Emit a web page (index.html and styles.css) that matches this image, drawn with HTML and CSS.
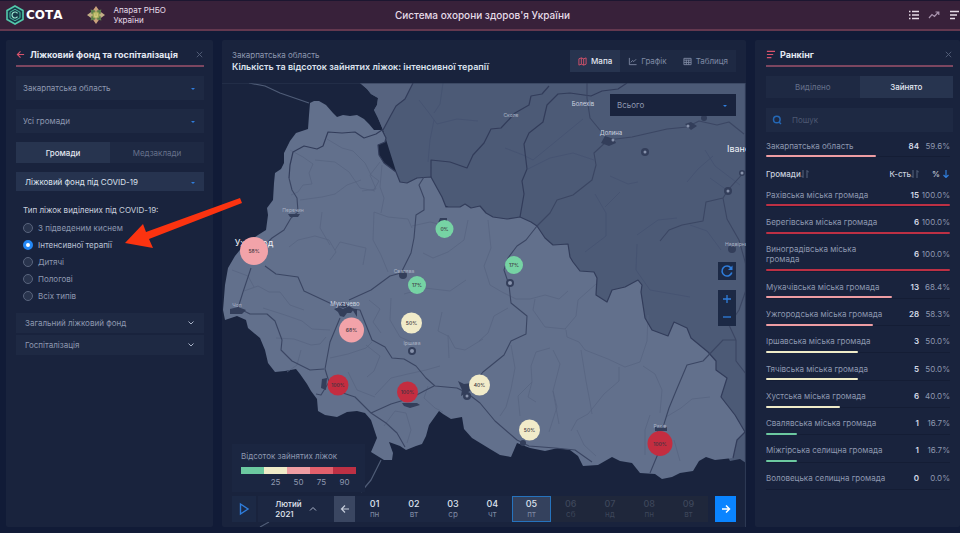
FILE: index.html
```html
<!DOCTYPE html>
<html lang="uk">
<head>
    <meta charset="UTF-8">
    <meta name="viewport" content="width=device-width, initial-scale=1.0">
    <title>Система охорони здоров'я України</title>
    <link rel="stylesheet" href="styles.css">
</head>
<body>
    <header class="topbar">
        <div class="brand">
            <svg class="logo" viewBox="0 0 20 20">
                <path d="M10 1 L18 5.5 V14.5 L10 19 L2 14.5 V5.5 Z" fill="#173a48" stroke="#52c9ab" stroke-width="1.6"/>
                <path d="M10 4.3 L15 7.2 V12.8 L10 15.7 L5 12.8 V7.2 Z" fill="none" stroke="#49b89f" stroke-width="1"/>
                <path d="M12.5 8.3 A3 3 0 1 0 12.5 11.7" fill="none" stroke="#9be9d2" stroke-width="1.2"/>
            </svg>
            <span class="logo-text">СОТА</span>
            <svg class="emblem" viewBox="0 0 20 20">
                <path d="M10 0 L13.5 5 L10 9 L6.5 5 Z M10 20 L13.5 15 L10 11 L6.5 15 Z" fill="#c9a27c"/>
                <path d="M0 10 L5 6.5 L9 10 L5 13.5 Z M20 10 L15 6.5 L11 10 L15 13.5 Z" fill="#c2ae86"/>
                <path d="M4 4 L9 5 L10 10 L5 9 Z M16 4 L11 5 L10 10 L15 9 Z M4 16 L5 11 L10 10 L9 15 Z M16 16 L15 11 L10 10 L11 15 Z" fill="#5f7f4c"/>
                <circle cx="10" cy="10" r="4" fill="#a3a958"/>
                <path d="M8.5 8 V12 H11.5 V8 M10 7 V13" fill="none" stroke="#e4d98e" stroke-width=".8"/>
            </svg>
            <span class="owner">Апарат РНБО<br>України</span>
        </div>
        <h1>Система охорони здоров'я України</h1>
        <nav class="top-icons">
            <button aria-label="Список"><svg viewBox="0 0 12 12"><path d="M1 2.5h1.5M4 2.5h7M1 6h1.5M4 6h7M1 9.5h1.5M4 9.5h7" stroke="#e6dce8" stroke-width="1.5"/></svg></button>
            <button aria-label="Динаміка"><svg viewBox="0 0 12 12"><path d="M1 9 L4 5.5 L6.5 7.5 L10.5 3 M7.5 3h3.3v3" fill="none" stroke="#a894ae" stroke-width="1.2"/></svg></button>
            <button aria-label="Ранкінг"><svg viewBox="0 0 12 12"><path d="M2 2.5h9M2 6h7M2 9.5h5" stroke="#e6dce8" stroke-width="1.5"/></svg></button>
        </nav>
    </header>

    <main>
        <section class="panel filters">
            <div class="panel-head">
                <button aria-label="Назад"><svg viewBox="0 0 10 10"><path d="M9 5H1.5M5 1.5 L1.5 5 L5 8.5" fill="none" stroke="#d9536c" stroke-width="1.2"/></svg></button>
                <h2>Ліжковий фонд та госпіталізація</h2>
                <button class="close" aria-label="Закрити"><svg viewBox="0 0 10 10"><path d="M2 2 L8 8 M8 2 L2 8" stroke="#56617a" stroke-width="1"/></svg></button>
            </div>
            <div class="select"><select aria-label="Область"><option>Закарпатська область</option></select></div>
            <div class="select"><select aria-label="Громада"><option>Усі громади</option></select></div>
            <div class="tabs">
                <button class="active">Громади</button>
                <button>Медзаклади</button>
            </div>
            <div class="select open"><select aria-label="Фонд"><option>Ліжковий фонд під COVID-19</option></select></div>
            <fieldset>
                <legend>Тип ліжок виділених під COVID-19:</legend>
                <label><input type="radio" name="bed">З підведеним киснем</label>
                <label class="checked"><input type="radio" name="bed" checked>Інтенсивної терапії</label>
                <label><input type="radio" name="bed">Дитячі</label>
                <label><input type="radio" name="bed">Пологові</label>
                <label><input type="radio" name="bed">Всіх типів</label>
            </fieldset>
            <div class="accordion">
                <button>Загальний ліжковий фонд<svg viewBox="0 0 8 8"><path d="M1.5 2.5 L4 5 L6.5 2.5" fill="none" stroke="#a9b3c8"/></svg></button>
                <button>Госпіталізація<svg viewBox="0 0 8 8"><path d="M1.5 2.5 L4 5 L6.5 2.5" fill="none" stroke="#a9b3c8"/></svg></button>
            </div>
        </section>

        <section class="panel center">
            <div class="center-head">
                <div>
                    <p>Закарпатська область</p>
                    <h2>Кількість та відсоток зайнятих ліжок: інтенсивної терапії</h2>
                </div>
                <div class="views">
                    <button class="active"><svg viewBox="0 0 10 10"><path d="M1 2 L3.7 1 L6.3 2 L9 1 V8 L6.3 9 L3.7 8 L1 9 Z M3.7 1V8M6.3 2V9" fill="none" stroke="#d9536c"/></svg>Мапа</button>
                    <button><svg viewBox="0 0 10 10"><path d="M1.5 1V8.5H9.5M3 6 L5 4 L6.5 5 L9 2.5" fill="none" stroke="#7f89a3"/></svg>Графік</button>
                    <button><svg viewBox="0 0 10 10"><path d="M1 1.5H9V8.5H1ZM1 3.5H9M1 6H9M3.7 3V8.5M6.3 3V8.5" fill="none" stroke="#7f89a3"/></svg>Таблиця</button>
                </div>
            </div>
            <div class="map-wrap">
                <svg class="map" viewBox="222 83 524 444" preserveAspectRatio="xMidYMin slice">
                    <!-- neighbouring regions -->
                    <path class="neighbour" d="M360 83 L367 89 L371 94 L378 98 L377 105 L374 110 L378 118 L383 130 L400 184 L480 222 L600 300 L700 400 L730 461 L740 459 L746 463 V83 Z"/>
                    <path class="neighbour lighter" d="M360 83 L367 89 L371 94 L378 98 L377 105 L374 110 L378 118 L383 130 L391 115 L396 106 L405 99 L413 83 Z"/>
                    <!-- Zakarpattia -->
                    <path class="region" d="M310 103 L314 101 L319 101 L326 105 L333 113 L337 117 L343 115 L350 116 L357 115 L364 119 L369 124 L374 130 L382 130 L386 138 L385 142 L378 145 L379 155 L384 163 L396 172 L400 182 L407 183 L417 178 L431 177 L437 188 L442 197 L446 207 L460 207 L465 204 L471 208 L480 206 L486 213 L493 217 L507 219 L520 217 L531 222 L537 226 L545 238 L553 245 L568 244 L570 257 L573 262 L580 271 L594 272 L597 278 L596 295 L607 302 L612 290 L625 287 L638 280 L642 285 L641 292 L645 318 L652 330 L668 336 L674 322 L687 328 L691 338 L708 352 L716 361 L716 370 L727 378 L721 397 L735 415 L745 432 L737 440 L733 458 L715 460 L706 457 L699 461 L693 471 L680 473 L672 477 L662 479 L655 474 L640 473 L632 463 L620 461 L612 457 L598 465 L583 466 L578 456 L570 450 L558 448 L545 451 L530 448 L517 443 L511 457 L500 455 L490 449 L472 438 L464 429 L462 417 L451 419 L443 414 L439 411 L434 418 L429 425 L426 436 L422 444 L416 446 L406 450 L400 446 L389 442 L393 453 L392 460 L384 460 L371 452 L377 438 L371 420 L365 413 L357 411 L347 412 L337 417 L325 415 L318 411 L317 399 L311 391 L307 384 L300 374 L296 369 L285 371 L275 372 L268 363 L265 350 L260 338 L248 328 L246 320 L237 316 L225 320 L223 310 L225 285 L228 268 L235 256 L244 245 L258 235 L266 230 L268 215 L267 208 L273 200 L274 183 L275 173 L281 169 L284 163 L284 153 L290 141 L296 133 L308 129 L309 115 Z"/>
                    <!-- community borders -->
                    <g class="minor">
                        <path d="M290 150 L303 157 L313 164 L309 173 L312 184 L303 185 L298 192 L291 195 M327 139 L342 148 L353 151 L365 163 L371 175 L379 181 L373 191 M315 160 L335 162 L349 172 L360 188 L375 191 M380 162 L370 175 L376 189 L362 191 M300 200 L322 197 L335 194 L347 185 L361 180 M289 247 L298 240 L315 236 L329 240 L336 252 L330 260 M335 250 L340 242 L357 246 L366 248 L363 265 M374 212 L388 217 L408 219 L412 228 M374 212 L373 240 L381 255 L388 272 M382 165 L380 187 L384 198 L381 213 M322 212 L320 228 L330 245 M412 226 L430 222 L447 226 M423 253 L433 258 L448 252 L464 240 L468 220 M404 294 L425 288 L450 291 L466 280"/>
                        <path d="M232 270 L248 276 L254 287 M244 291 L258 286 L269 292 L280 292 L290 305 L304 310 M263 308 L285 315 L302 321 L312 329 L330 330 M276 338 L294 339 L311 345 L320 344 L326 337 M287 372 L297 365 L301 350 M330 358 L348 354 L366 348 L372 342 M366 345 L380 356 L374 371 L367 377 M348 372 L357 390 L375 397 M369 300 L380 309 L373 322 L381 333 M391 298 L390 320 L400 337 L418 345 M375 395 L391 378 L408 374 L426 370 L440 366 M428 386 L424 398 L435 408 L443 412 M384 426 L395 411 L406 413 L411 430 L407 443 M448 335 L455 348 L465 350 L483 339 M442 312 L438 331 L448 336 L449 358"/>
                        <path d="M488 220 L491 248 L484 266 L490 285 L502 292 M508 308 L494 316 L488 333 L479 341 M502 292 L516 299 L530 299 L545 295 L559 299 L568 291 M535 299 L533 310 L545 327 L566 329 M565 329 L576 316 L578 300 L596 284 M566 330 L567 337 L579 342 L585 350 L608 359 L625 367 L640 362 L647 341 L648 315 M553 350 L560 364 L553 391 L559 424 M550 348 L536 352 L531 366 L532 382 L528 397 L536 402 M581 350 L586 381 L590 402 L592 414 M619 367 L619 381 L604 394 L588 414 L577 420 L571 431 M577 430 L584 445 L596 456 M643 366 L655 374 L662 390 L660 413 M645 455 L645 430 L650 415 M666 417 L681 408 L692 399 L710 397 M674 440 L680 461 M511 345 L515 368 L511 389 L506 407 L500 416 M520 416 L518 396 L532 382 M549 432 L557 407 L553 391"/>
                    </g>
                    <g class="minor far">
                        <path d="M419 100 L429 113 L437 124 L457 119 L478 121 M434 120 L430 140 L428 162 M443 83 L440 104 L434 113 M505 148 L523 155 L533 160 L555 142 L583 119 M528 169 L550 158 L573 153 L594 160 M595 194 L606 213 L606 236 L585 252 M637 235 L658 220 L677 218 M687 182 L698 169 L713 156 M705 150 L715 166 L740 185 M610 176 L628 184 L638 182 M620 192 L605 207 M690 225 L707 231 L721 250 M637 244 L636 270 L650 290 L690 297 M710 178 L731 193"/>
                    </g>
                    <!-- regional borders and roads -->
                    <g class="border">
                        <path d="M289 178 L290 165 L293 152 L304 146 L317 149 L323 146 L328 132 L342 133 L355 132 L364 138 L376 134 L382 130 L386 138 L385 142 L378 145 L379 155 L384 163 L396 172 L400 182 L407 183 L417 178 L431 177 L437 188 L442 197 L446 207 L460 207 L465 204 L471 208 L480 206 L486 213 L493 217 L507 219 L520 217 L531 222 L537 226 L545 238 L553 245 L568 244 L570 257 L573 262 L580 271 L594 272 L597 278 L596 295 L607 302 L612 290 L625 287 L638 280 L642 285 L641 292 L645 318 L652 330 L668 336 L674 322 L687 328 L691 338 L708 352 L716 361 L716 370 L727 378 L721 397 L735 415 L745 432 L737 440 L733 458"/>
                        <path d="M413 83 L405 99 L396 106 L391 115 L383 130 M431 177 L431 160 L450 162 L467 168 L473 155 L484 143 L491 129 L501 128 L515 113 L529 105 L531 96 L542 94 L549 86"/>
                        <path d="M520 217 L524 194 L522 181 L527 169 L524 144 L529 133 L543 122 L547 105 L558 94 L570 93 L591 96 L602 91 L618 89 L627 83"/>
                    </g>
                    <g class="road">
                        <path d="M289 178 L292 190 L297 198 L298 212 L291 218 L284 230 L272 238 L260 250 M265 266 L276 274 L298 277 L304 291 L334 305 L345 308 L360 310 L372 340 L385 347 L392 358 L404 359 L416 366 L426 378 L435 386 L457 388 L467 393 L480 403 L495 421 L517 440 L529 446 L555 448 L575 450 L592 462"/>
                        <path d="M251 268 L243 292 L238 308 L250 314 L267 314 L275 321 L282 340 L281 350 L292 361 L310 370 L324 369 M340 318 L330 342 L325 369 L329 382 L321 395 L316 394 M329 382 L340 392 L355 397 L371 413 L386 423 L397 433 L405 447 M371 413 L391 404 L411 398 L426 390 L434 386"/>
                        <path d="M349 300 L371 290 L390 276 L401 273 L411 253 L414 238 L416 215 L424 210 L424 198 L419 185 L424 177 M537 226 L526 240 L517 246 L508 258 L504 270 L509 285 L511 303 L527 316 L526 334 L511 341 L504 355 L483 372 L470 388"/>
                        <path d="M537 226 L550 213 L557 200 L573 195 L592 180 L596 165 L594 153 L608 140 L632 137 L667 129 L687 127 L699 121 L717 125 L729 122 L744 134 M587 83 L587 98 L590 118 L604 135 M660 241 L669 230 L682 225 L703 221 L706 202 L723 198 L728 190 L746 170 M723 198 L727 219 L739 240 L746 265"/>
                        <path d="M650 473 L660 449 L652 438 L664 424 L669 408 L676 391 L687 365 L703 361 L723 340 L736 340 L736 361 L746 374 M736 340 L729 325 L739 310 L746 290"/>
                    </g>
                    <path class="far-line" d="M249 83 L265 86 L280 93 L309 103 M381 460 L371 480 L361 492 M269 522 L260 527"/>
                    <path class="far-line faint" d="M222 83 H746 M745.5 83 V527"/>
                    <!-- towns -->
                    <g class="town">
                        <path d="M334 309l5-2l4 2l6-3l5 3l-3 4l-4 0l-3 4l-4-1l-2-4z M340 303h7v4h-6z M230 309l8-2l8 3l-4 4l-12 0z M288 214h12l-2 3h-8z M458 381l6 3l8-1l-2 8l-9 5l1-6z M402 403h15l3 2l-10 3l-6-2z M352 309h5v8z M322 379l5-1l-1 12l-5-2z"/>
                        <path d="M655 427h12v4h-12z M605 136l9 3l2 4l-7 3l-8-3z M685 124l6-2l6 4l-6 4z M440 218h7v5h-9z"/>
                        <circle cx="412" cy="351" r="4"/><circle cx="510" cy="283" r="4"/><circle cx="523" cy="443" r="3"/><circle cx="403" cy="275" r="4"/><circle cx="467" cy="396" r="4"/>
                        <circle cx="645" cy="152" r="4"/><circle cx="728" cy="191" r="4"/><circle cx="742" cy="173" r="3"/><circle cx="732" cy="249" r="4"/><circle cx="704" cy="118" r="3"/>
                    </g>
                    <g class="town-dot">
                        <circle cx="412" cy="351" r="2"/><circle cx="510" cy="283" r="2"/><circle cx="613" cy="140" r="1.5"/><circle cx="645" cy="152" r="1.5"/><circle cx="728" cy="191" r="1.5"/><circle cx="742" cy="173" r="1.5"/><circle cx="688" cy="126" r="1.5"/><circle cx="467" cy="396" r="1.5"/>
                    </g>
                    <g class="town-name">
                        <text x="583" y="106">Болехів</text>
                        <text x="611" y="135">Долина</text>
                        <text class="sm" x="511" y="117">Сколе</text>
                        <text class="sm" x="293" y="212">Перечин</text>
                        <text class="sm" x="404" y="273">Свалява</text>
                        <text class="sm" x="237" y="307">Чоп</text>
                        <text x="345" y="306">Мукачево</text>
                        <text class="sm" x="412" y="345">Іршава</text>
                        <text class="sm" x="660" y="428">Рахів</text>
                        <text class="sm start" x="725" y="246">Надвірна</text>
                        <text class="lg" x="254" y="246">Ужгород</text>
                        <text class="lg start" x="727" y="152">Івано-Франківськ</text>
                    </g>
                    <!-- occupancy pins -->
                    <g class="pins">
                        <circle class="c75" cx="254" cy="251" r="14"/><text x="254" y="253">58%</text>
                        <circle class="c25" cx="444.5" cy="229" r="9"/><text x="444.5" y="231">0%</text>
                        <circle class="c25" cx="514" cy="265" r="9"/><text x="514" y="267">17%</text>
                        <circle class="c25" cx="417" cy="285" r="9"/><text x="417" y="287">17%</text>
                        <circle class="c50" cx="411.5" cy="323" r="10.5"/><text x="411.5" y="325">50%</text>
                        <circle class="c75" cx="351.5" cy="330" r="12.5"/><text x="351.5" y="332">68%</text>
                        <circle class="c100" cx="338" cy="385" r="10.5"/><text x="338" y="387">100%</text>
                        <circle class="c100" cx="407.5" cy="392" r="10.5"/><text x="407.5" y="394">100%</text>
                        <circle class="c50" cx="479.5" cy="385" r="10.5"/><text x="479.5" y="387">40%</text>
                        <circle class="c50" cx="529.5" cy="430" r="10.5"/><text x="529.5" y="432">50%</text>
                        <circle class="c100" cx="660" cy="443.5" r="12.5"/><text x="660" y="445.5">100%</text>
                    </g>
                </svg>

                <div class="select total"><select aria-label="Показник"><option>Всього</option></select></div>
                <div class="map-tools">
                    <button aria-label="Оновити"><svg viewBox="0 0 14 14"><path d="M11.8 8.5 A5 5 0 1 1 11 4" fill="none" stroke="#2f7ddb" stroke-width="1.6"/><path d="M12.5 1.5 V6 H8 Z" fill="#2f7ddb"/></svg></button>
                    <div class="zoom">
                        <button aria-label="Збільшити"><svg viewBox="0 0 14 14"><path d="M7 3V11M3 7H11" stroke="#2f7ddb" stroke-width="1.3"/></svg></button>
                        <button aria-label="Зменшити"><svg viewBox="0 0 14 14"><path d="M3 7H11" stroke="#2f7ddb" stroke-width="1.3"/></svg></button>
                    </div>
                </div>
                <div class="legend">
                    <p>Відсоток зайнятих ліжок</p>
                    <div class="scale">
                        <i class="b25"></i><i class="b50"></i><i class="b75"></i><i class="b90"></i><i class="b100"></i>
                        <span></span><span>25</span><span>50</span><span>75</span><span>90</span>
                    </div>
                </div>
                <div class="timeline">
                    <button class="play" aria-label="Грати"><svg viewBox="0 0 14 14"><path d="M3.5 2 L11 7 L3.5 12 Z" fill="none" stroke="#2f7ddb" stroke-width="1.4"/></svg></button>
                    <button class="month"><span>Лютий<br>2021</span><svg viewBox="0 0 8 8"><path d="M1 5.5 L4 2.5 L7 5.5" fill="none" stroke="#a9b3c8"/></svg></button>
                    <button class="step" aria-label="Попередній день"><svg viewBox="0 0 10 10"><path d="M9 5H1.5M5 1.5 L1.5 5 L5 8.5" fill="none" stroke="#c5ccda" stroke-width="1.2"/></svg></button>
                    <div class="days">
                        <button>01<small>пн</small></button>
                        <button>02<small>вт</small></button>
                        <button>03<small>ср</small></button>
                        <button>04<small>чт</small></button>
                        <button class="current">05<small>пт</small></button>
                        <button disabled>06<small>сб</small></button>
                        <button disabled>07<small>нд</small></button>
                        <button disabled>08<small>пн</small></button>
                        <button disabled>09<small>вт</small></button>
                    </div>
                    <button class="step next" aria-label="Наступний день"><svg viewBox="0 0 10 10"><path d="M1 5H8.5M5 1.5 L8.5 5 L5 8.5" fill="none" stroke="#fff" stroke-width="1.5"/></svg></button>
                </div>
            </div>
        </section>

        <section class="panel ranking">
            <div class="panel-head">
                <svg viewBox="0 0 10 10"><path d="M1 1.5h9M1 5h7M1 8.5h5" stroke="#d9536c" stroke-width="1.2"/></svg>
                <h2>Ранкінг</h2>
                <button class="close" aria-label="Закрити"><svg viewBox="0 0 10 10"><path d="M2 2 L8 8 M8 2 L2 8" stroke="#56617a" stroke-width="1"/></svg></button>
            </div>
            <div class="tabs">
                <button>Виділено</button>
                <button class="active">Зайнято</button>
            </div>
            <label class="search">
                <svg viewBox="0 0 10 10"><circle cx="4.8" cy="4.5" r="3.3" fill="none" stroke="#2467b5" stroke-width="1.5"/><path d="M7 7 L9 9" stroke="#2467b5" stroke-width="1.5"/></svg>
                <input type="text" placeholder="Пошук" aria-label="Пошук">
            </label>
            <div class="table-wrap">
                <table>
                    <tbody class="sum">
                        <tr><td>Закарпатська область<i class="bar b75" style="width:59.6%"></i></td><td>84</td><td>59.6%</td></tr>
                    </tbody>
                    <tbody class="head">
                        <tr>
                            <th>Громади<svg viewBox="0 0 8 8"><path d="M2 0V7.5M0 5.5L2 7.5M6 8V.5M8 2.5L6 .5" fill="none" stroke="#5f6b86" stroke-width=".9"/></svg></th>
                            <th>К-сть<svg viewBox="0 0 8 8"><path d="M2 0V7.5M0 5.5L2 7.5M6 8V.5M8 2.5L6 .5" fill="none" stroke="#5f6b86" stroke-width=".9"/></svg></th>
                            <th>% <svg viewBox="0 0 8 8"><path d="M4 0V7.5M1.5 5L4 7.5L6.5 5" fill="none" stroke="#2f7ddb" stroke-width="1.2"/></svg></th>
                        </tr>
                    </tbody>
                    <tbody>
                        <tr><td>Рахівська міська громада<i class="bar b100" style="width:100%"></i></td><td>15</td><td>100.0%</td></tr>
                        <tr><td>Берегівська міська громада<i class="bar b100" style="width:100%"></i></td><td>6</td><td>100.0%</td></tr>
                        <tr><td>Виноградівська міська<br>громада<i class="bar b100" style="width:100%"></i></td><td>6</td><td>100.0%</td></tr>
                        <tr><td>Мукачівська міська громада<i class="bar b75" style="width:68.4%"></i></td><td>13</td><td>68.4%</td></tr>
                        <tr><td>Ужгородська міська громада<i class="bar b75" style="width:58.3%"></i></td><td>28</td><td>58.3%</td></tr>
                        <tr><td>Іршавська міська громада<i class="bar b50" style="width:50%"></i></td><td>3</td><td>50.0%</td></tr>
                        <tr><td>Тячівська міська громада<i class="bar b50" style="width:50%"></i></td><td>5</td><td>50.0%</td></tr>
                        <tr><td>Хустська міська громада<i class="bar b50" style="width:40%"></i></td><td>6</td><td>40.0%</td></tr>
                        <tr><td>Свалявська міська громада<i class="bar b25" style="width:16.7%"></i></td><td>1</td><td>16.7%</td></tr>
                        <tr><td>Міжгірська селищна громада<i class="bar b25" style="width:16.7%"></i></td><td>1</td><td>16.7%</td></tr>
                        <tr><td>Воловецька селищна громада<i class="bar" style="width:0%"></i></td><td>0</td><td>0.0%</td></tr>
                    </tbody>
                </table>
            </div>
        </section>
    </main>

    <svg class="pointer" viewBox="0 0 120 52"><path d="M2 46 L20 27 L23 35 L117 1 L119 6 L26 42 L30 51 Z" fill="#fb3310"/></svg>
</body>
</html>
```
FILE: styles.css
```css
* {
    box-sizing: border-box;
}
body {
    margin: 0;
    height: 100vh;
    display: flex;
    flex-direction: column;
    overflow: hidden;
    position: relative;
    background: #111b37;
    color: #8e98b0;
    font: 8px/10px Inter, sans-serif;
}
h1, h2, p {
    margin: 0;
}
button, select, input {
    font: inherit;
    color: inherit;
    background: none;
    border: none;
    margin: 0;
    padding: 0;
}
button {
    cursor: pointer;
}
svg {
    display: block;
    flex: none;
}

/* Top bar */
.topbar {
    display: grid;
    grid-template-columns: 1fr auto 1fr;
    align-items: center;
    height: 31px;
    padding-left: 5px;
    background: #38213a;
    border-top: 1px solid #1c1630;
    border-bottom: 2px solid #63384f;
    color: #e6dce8;
}
.topbar h1 {
    font-size: 10px;
    font-weight: 500;
}
.brand {
    display: flex;
    align-items: center;
}
.logo {
    width: 20px;
    height: 20px;
}
.logo-text {
    margin-left: 1px;
    font: bold 12px/20px "DejaVu Sans", sans-serif;
    color: #fff;
}
.emblem {
    width: 18px;
    height: 18px;
    margin: 0 8px 0 25px;
}
.top-icons {
    display: flex;
    justify-content: flex-end;
    gap: 8px;
}
.top-icons svg {
    width: 12px;
    height: 12px;
}

main {
    flex: 1;
    min-height: 0;
    display: grid;
    grid-template-columns: 207px 1fr 205px;
    gap: 9px;
    padding: 9px 0 6px 6px;
}
.panel {
    min-width: 0;
    min-height: 0;
    display: flex;
    flex-direction: column;
    background: #19233d;
    border-radius: 2px;
}
.panel-head {
    display: flex;
    align-items: center;
    gap: 5px;
    height: 27px;
    padding-top: 4px;
    border-bottom: 2px solid #7c4660;
}
.panel-head svg {
    width: 9px;
    height: 9px;
}
.panel-head h2 {
    flex: 1;
    font-size: 9px;
    font-weight: 700;
    color: #e3e8f2;
    white-space: nowrap;
}

/* Filters */
.filters {
    padding: 0 9px 0 10px;
    gap: 9px;
}
.select {
    position: relative;
    height: 24px;
    background: #1e2943;
}
.select select {
    width: 100%;
    height: 100%;
    padding-left: 7px;
    appearance: none;
}
.select::after {
    content: "";
    position: absolute;
    right: 9px;
    top: 50%;
    border: 2px solid transparent;
    border-top-color: #2f7ddb;
    pointer-events: none;
}
.select.open {
    height: 19px;
    background: #26334f;
    color: #dce2ee;
}
.select.open select {
    padding-left: 9px;
}
.tabs {
    display: grid;
    grid-template-columns: 1fr 1fr;
    height: 21px;
    background: #1e2943;
    color: #66718b;
}
.tabs .active {
    background: #27344f;
    color: #e3e8f2;
    font-weight: 500;
}
fieldset {
    margin: 0;
    padding: 5px 0 0 7px;
    border: none;
    min-width: 0;
}
legend {
    float: left;
    width: 100%;
    padding: 0 0 4px;
    color: #c9d0de;
}
fieldset label {
    clear: both;
    display: flex;
    align-items: center;
    gap: 5px;
    height: 17px;
}
fieldset .checked {
    color: #b9c2d4;
}
input[type="radio"] {
    appearance: none;
    width: 10px;
    height: 10px;
    border: 1px solid #59647d;
    border-radius: 50%;
    background: #29344d;
}
input[type="radio"]:checked {
    border: 3px solid #2387f5;
    background: #fff;
}
.accordion {
    display: grid;
    gap: 2px;
}
.accordion button {
    display: flex;
    align-items: center;
    justify-content: space-between;
    height: 20px;
    padding: 0 9px;
    background: #1e2943;
}
.accordion svg {
    width: 8px;
    height: 8px;
}

/* Map column */
.center-head {
    display: flex;
    justify-content: space-between;
    height: 43px;
    padding: 10px 10px 0;
}
.center-head h2 {
    margin-top: 2px;
    font-size: 9px;
    font-weight: 600;
    color: #dce2ee;
    white-space: nowrap;
}
.views {
    display: flex;
    height: 22px;
    background: #1e2943;
    color: #7f89a3;
}
.views button {
    display: flex;
    align-items: center;
    gap: 4px;
    padding: 0 8px;
}
.views .active {
    background: #27344f;
    color: #e3e8f2;
    font-weight: 500;
}
.views svg {
    width: 9px;
    height: 9px;
}
.map-wrap {
    position: relative;
    flex: 1;
    min-height: 0;
    overflow: hidden;
}
.map {
    width: 100%;
    height: 100%;
}
.region { fill: #62708c; }
.neighbour { fill: #4c5a76; }
.neighbour.lighter { fill: #56637f; }
.minor, .border, .road, .far-line {
    fill: none;
    stroke-linejoin: round;
}
.minor { stroke: #566380; stroke-width: .7; }
.minor.far { stroke: #435070; }
.border { stroke: #323c5a; stroke-width: 1.2; }
.road { stroke: #3b4663; stroke-width: 1.1; }
.far-line { stroke: #4f5c77; stroke-width: 1.2; }
.far-line.faint { stroke: #2c3853; }
.town { fill: #333e5a; }
.town-dot { fill: #8792ab; }
.town-name {
    font-size: 6px;
    fill: #ced4e0;
    text-anchor: middle;
}
.town-name .sm { font-size: 5px; fill: #aab3c5; }
.town-name .lg { font-size: 9px; fill: #eef1f6; }
.town-name .start { text-anchor: start; }
.pins {
    font-size: 5px;
    font-weight: 500;
    text-anchor: middle;
    fill: #3c3440;
}
.c25 { fill: #76d3a4; }
.c50 { fill: #f1ebc9; }
.c75 { fill: #f2a3a9; }
.c100 { fill: #c42d40; }

.total {
    position: absolute;
    top: 11px;
    right: 10px;
    width: 126px;
    height: 22px;
    background: #19233d;
}
.map-tools {
    position: absolute;
    top: 179px;
    right: 10px;
    width: 18px;
    display: grid;
    gap: 10px;
}
.map-tools button {
    display: grid;
    place-items: center;
    width: 18px;
    height: 18px;
    background: #1c2945;
}
.map-tools svg {
    width: 14px;
    height: 14px;
}
.legend {
    position: absolute;
    left: 10px;
    bottom: 35px;
    width: 133px;
    padding: 7px 9px 5px;
    background: #1b2641;
}
.scale {
    display: grid;
    grid-template-columns: repeat(5, 1fr);
    row-gap: 3px;
    margin-top: 6px;
    text-align: center;
}
.scale i {
    height: 7px;
}
.b25 { background: #6cc9a0; }
.b50 { background: #efebc8; }
.b75 { background: #ee9da3; }
.b90 { background: #e2606c; }
.b100 { background: #bd3044; }

.timeline {
    position: absolute;
    left: 10px;
    right: 10px;
    bottom: 5px;
    height: 26px;
    display: flex;
}
.timeline > button {
    display: flex;
    align-items: center;
    justify-content: center;
}
.play {
    width: 24px;
    margin-right: 2px;
    background: #1c2945;
}
.play svg {
    width: 14px;
    height: 14px;
}
.month {
    width: 76px;
    gap: 7px;
    background: #1c2742;
    color: #e3e8f2;
    font-weight: 500;
    text-align: left;
}
.month svg {
    width: 8px;
    height: 8px;
}
.step {
    width: 21px;
    background: #3a4661;
}
.step svg {
    width: 10px;
    height: 10px;
}
.next {
    background: #0a84ff;
}
.days {
    flex: 1;
    display: grid;
    grid-template-columns: repeat(9, 1fr);
    margin-right: 7px;
    background: #1c2742;
}
.days button {
    color: #dce2ee;
    font-size: 9px;
    font-weight: 500;
}
.days small {
    display: block;
    font-size: 8px;
    font-weight: 400;
    color: #7f89a3;
}
.days .current {
    background: #34415d;
    border: 1px solid #2673bd;
}
.days button:disabled, .days button:disabled small {
    background: #1f273b;
    color: #3d465a;
}

/* Ranking */
.ranking {
    padding: 0 7px 37px 11px;
}
.ranking .tabs {
    margin: 9px 0 10px;
    height: 22px;
}
.search {
    display: flex;
    align-items: center;
    gap: 10px;
    height: 24px;
    padding-left: 6px;
    background: #1e2943;
}
.search svg {
    width: 10px;
    height: 10px;
}
.search input {
    width: 100%;
}
.search input::placeholder {
    color: #4d5872;
}
.table-wrap {
    flex: 1;
    min-height: 0;
    padding-right: 3px;
}
table {
    width: 100%;
    height: 100%;
    border-collapse: collapse;
}
tr {
    position: relative;
}
td {
    padding: 10px 0 6px;
    text-align: right;
    border-bottom: 1px solid #141d35;
}
td:first-child, th:first-child {
    text-align: left;
    white-space: nowrap;
}
td:nth-child(2) {
    width: 28px;
    color: #d5dbe8;
    font-weight: 600;
}
td:nth-child(3) {
    width: 31px;
}
.sum td {
    padding: 9px 0 5px;
}
th {
    padding: 12px 0 0;
    text-align: right;
    font-weight: 500;
    color: #c9d0de;
    white-space: nowrap;
}
th svg {
    display: inline-block;
    width: 8px;
    height: 8px;
    vertical-align: -1px;
}
.bar {
    position: absolute;
    left: 0;
    bottom: 0;
    height: 2px;
    border-radius: 1px;
}

/* Red arrow over the filters */
.pointer {
    position: absolute;
    left: 123px;
    top: 197px;
    width: 120px;
    height: 52px;
}
```
